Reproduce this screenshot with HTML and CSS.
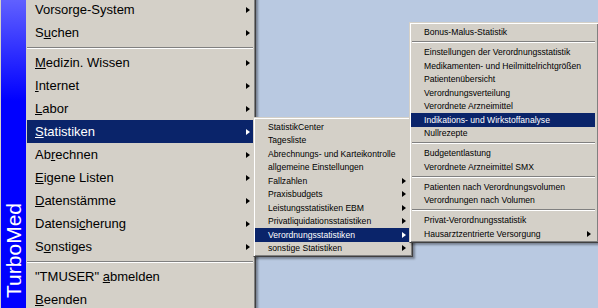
FILE: index.html
```html
<!DOCTYPE html>
<html lang="de">
<head>
    <meta charset="UTF-8">
    <title>TurboMed Menü</title>
    <link rel="stylesheet" href="styles.css">
</head>
<body>
    <div class="desk">
        <div class="menu main">
            <div class="side"><span>TurboMed</span></div>
            <div class="items">
                <div class="item sub"><span>Vorsorge-System</span></div>
                <div class="item sub"><span>S<u>u</u>chen</span></div>
                <div class="sep"></div>
                <div class="item sub"><span><u>M</u>edizin. Wissen</span></div>
                <div class="item sub"><span><u>I</u>nternet</span></div>
                <div class="item sub"><span><u>L</u>abor</span></div>
                <div class="item sub on"><span><u>S</u>tatistiken</span></div>
                <div class="item sub"><span>Ab<u>r</u>echnen</span></div>
                <div class="item sub"><span><u>E</u>igene Listen</span></div>
                <div class="item sub"><span><u>D</u>atenstämme</span></div>
                <div class="item sub"><span>Datensi<u>c</u>herung</span></div>
                <div class="item sub"><span>S<u>o</u>nstiges</span></div>
                <div class="sep"></div>
                <div class="item"><span>"TMUSER" <u>a</u>bmelden</span></div>
                <div class="item"><span><u>B</u>eenden</span></div>
            </div>
        </div>

        <div class="menu small stats">
            <div class="item"><span>StatistikCenter</span></div>
            <div class="item"><span>Tagesliste</span></div>
            <div class="item"><span>Abrechnungs- und Karteikontrolle</span></div>
            <div class="item"><span>allgemeine Einstellungen</span></div>
            <div class="item sub"><span>Fallzahlen</span></div>
            <div class="item sub"><span>Praxisbudgets</span></div>
            <div class="item sub"><span>Leistungsstatistiken EBM</span></div>
            <div class="item sub"><span>Privatliquidationsstatistiken</span></div>
            <div class="item sub on"><span>Verordnungsstatistiken</span></div>
            <div class="item sub"><span>sonstige Statistiken</span></div>
        </div>

        <div class="menu small verord">
            <div class="item"><span>Bonus-Malus-Statistik</span></div>
            <div class="sep"></div>
            <div class="item"><span>Einstellungen der Verordnungsstatistik</span></div>
            <div class="item"><span>Medikamenten- und Heilmittelrichtgrößen</span></div>
            <div class="item"><span>Patientenübersicht</span></div>
            <div class="item"><span>Verordnungsverteilung</span></div>
            <div class="item"><span>Verordnete Arzneimittel</span></div>
            <div class="item on"><span>Indikations- und Wirkstoffanalyse</span></div>
            <div class="item"><span>Nullrezepte</span></div>
            <div class="sep"></div>
            <div class="item"><span>Budgetentlastung</span></div>
            <div class="item"><span>Verordnete Arzneimittel SMX</span></div>
            <div class="sep"></div>
            <div class="item"><span>Patienten nach Verordnungsvolumen</span></div>
            <div class="item"><span>Verordnungen nach Volumen</span></div>
            <div class="sep"></div>
            <div class="item"><span>Privat-Verordnungsstatistik</span></div>
            <div class="item sub"><span>Hausarztzentrierte Versorgung</span></div>
        </div>
    </div>
</body>
</html>
```

FILE: styles.css
```css
body {
    margin: 0;
    background-color: #b9c9e1;
    font-family: "Liberation Sans", Arial, sans-serif;
    color: black;
}
.desk {
    position: relative;
    width: 598px;
    height: 308px;
    overflow: hidden;
}
.menu {
    position: absolute;
    box-sizing: border-box;
    background-color: #d4d0c8;
    border: 1px solid;
    border-color: #d4d0c8 #404040 #404040 #d4d0c8;
    box-shadow: inset 1px 1px #fff, inset -1px -1px #808080, 2px 2px 2px rgba(0, 0, 0, 0.35);
}
.item {
    display: flex;
    align-items: center;
    justify-content: space-between;
    white-space: nowrap;
}
.item.sub::after {
    content: '';
    border-left: 4px solid black;
    border-top: 3.5px solid transparent;
    border-bottom: 3.5px solid transparent;
}
.item.on {
    background-color: #0a246a;
    color: white;
}
.item.on::after {
    border-left-color: white;
}
.sep {
    display: flex;
    align-items: center;
}
.sep::before {
    content: '';
    flex: 1;
    border-top: 1px solid #808080;
    border-bottom: 1px solid #fff;
}

/* main menu with the blue side bar */
.main {
    left: 0;
    top: -5px;
    width: 256px;
    display: flex;
    padding: 2px 2px 2px 0;
}
.side {
    width: 25px;
    margin: -2px 1px -2px 0;
    background: linear-gradient(#6464ff 0, #0000ff 105px);
    display: flex;
    flex-direction: column;
    justify-content: flex-end;
    align-items: center;
    padding-bottom: 15px;
    box-sizing: border-box;
}
.side span {
    writing-mode: vertical-rl;
    transform: rotate(180deg);
    color: white;
    font-size: 21px;
    line-height: 25px;
}
.items {
    flex: 1;
    display: flex;
    flex-direction: column;
}
.main .item {
    height: 23px;
    padding: 0 3px 0 8px;
    font-size: 13px;
}
.main .sep {
    height: 7px;
}

/* sub menus */
.small {
    font-size: 8.6px;
}
.small .item {
    height: 13.5px;
    padding: 0 3px 0 13px;
}
.small .sep {
    height: 6.5px;
    padding-left: 1px;
}
.stats {
    left: 253px;
    top: 117px;
    width: 160px;
    padding: 2px 3px 1px 1px;
}
.verord {
    left: 409px;
    top: 22px;
    width: 190px;
    padding: 2.5px 3px 1px 1px;
}
.verord .item.sub {
    padding-right: 4px;
}
```
